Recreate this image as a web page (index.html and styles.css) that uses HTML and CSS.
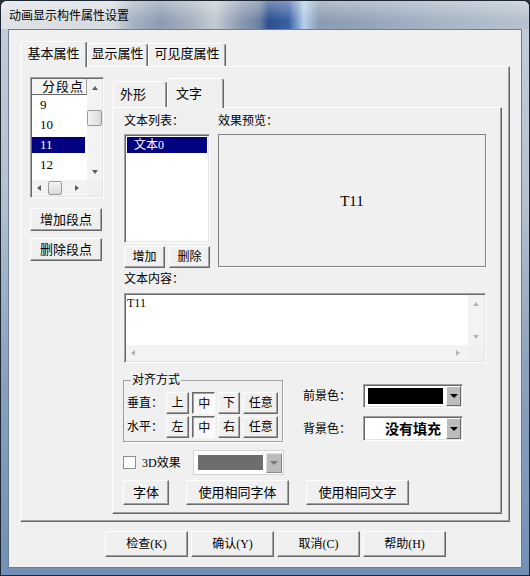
FILE: index.html
```html
<!DOCTYPE html>
<html lang="zh-CN">
<head>
    <meta charset="UTF-8">
    <title>动画显示构件属性设置</title>
    <link rel="stylesheet" href="styles.css">
</head>
<body>
<div class="window">
    <div class="titlebar">动画显示构件属性设置</div>
    <div class="client">
        <div class="tabs-outer">
            <div class="tabstrip">
                <div class="tab active w-basic">基本属性</div>
                <div class="tab w-show">显示属性</div>
                <div class="tab w-vis">可见度属性</div>
            </div>
            <div class="panel outer-panel">
                <div class="seg-col">
                    <div class="seg-list sunken">
                        <div class="seg-main">
                            <div class="seg-head">分段点</div>
                            <ul class="seg-items">
                                <li><span>9</span></li>
                                <li><span>10</span></li>
                                <li class="sel"><span>11</span></li>
                                <li><span>12</span></li>
                                <li><span>13</span></li>
                            </ul>
                        </div>
                        <div class="vbar">
                            <div class="sb-btn"><i class="ar ar-up"></i></div>
                            <div class="thumb v-thumb"></div>
                            <div class="sb-fill"></div>
                            <div class="sb-btn"><i class="ar ar-down"></i></div>
                        </div>
                        <div class="hbar">
                            <div class="sb-btn"><i class="ar ar-left"></i></div>
                            <div class="thumb h-thumb"></div>
                            <div class="sb-fill"></div>
                            <div class="sb-btn last"><i class="ar ar-right"></i></div>
                        </div>
                        <div class="sb-corner"></div>
                    </div>
                    <button class="btn seg-btn">增加段点</button>
                    <button class="btn seg-btn second">删除段点</button>
                </div>

                <div class="tabs-inner">
                    <div class="tabstrip inner-strip">
                        <div class="tab itab w-shape">外形</div>
                        <div class="tab itab active w-text">文字</div>
                    </div>
                    <div class="panel inner-panel">
                        <div class="label-row">
                            <span class="lbl-list">文本列表：</span>
                            <span>效果预览：</span>
                        </div>
                        <div class="main-row">
                            <div class="textlist-col">
                                <div class="textlist sunken">
                                    <div class="tl-item">文本0</div>
                                </div>
                                <div class="tl-btns">
                                    <button class="btn tl-btn">增加</button>
                                    <button class="btn tl-btn">删除</button>
                                </div>
                            </div>
                            <div class="preview">T11</div>
                        </div>
                        <div class="content-lbl">文本内容：</div>
                        <div class="memo sunken">
                            <div class="memo-text">T11</div>
                            <div class="vbar dim">
                                <div class="sb-btn"><i class="ar ar-up"></i></div>
                                <div class="sb-fill"></div>
                                <div class="sb-btn"><i class="ar ar-down"></i></div>
                            </div>
                            <div class="hbar dim">
                                <div class="sb-btn"><i class="ar ar-left"></i></div>
                                <div class="sb-fill"></div>
                                <div class="sb-btn last"><i class="ar ar-right"></i></div>
                            </div>
                            <div class="sb-corner"></div>
                        </div>

                        <div class="lower">
                            <fieldset class="align-group">
                                <legend>对齐方式</legend>
                                <div class="al-row">
                                    <span class="al-lbl">垂直：</span>
                                    <button class="btn al-btn">上</button>
                                    <button class="btn al-btn down">中</button>
                                    <button class="btn al-btn">下</button>
                                    <button class="btn al-btn wide">任意</button>
                                </div>
                                <div class="al-row second">
                                    <span class="al-lbl">水平：</span>
                                    <button class="btn al-btn">左</button>
                                    <button class="btn al-btn down">中</button>
                                    <button class="btn al-btn">右</button>
                                    <button class="btn al-btn wide">任意</button>
                                </div>
                            </fieldset>
                            <div class="colors">
                                <div class="color-row">
                                    <span class="color-lbl">前景色：</span>
                                    <div class="combo sunken">
                                        <div class="swatch black"></div>
                                        <div class="dd"><i class="ar-dd"></i></div>
                                    </div>
                                </div>
                                <div class="color-row row2">
                                    <span class="color-lbl">背景色：</span>
                                    <div class="combo sunken">
                                        <div class="swatch nofill">没有填充</div>
                                        <div class="dd"><i class="ar-dd"></i></div>
                                    </div>
                                </div>
                            </div>
                        </div>

                        <div class="fx-row">
                            <span class="checkbox"></span>
                            <span class="fx-lbl">3D效果</span>
                            <div class="combo combo-off">
                                <div class="swatch gray"></div>
                                <div class="dd off"><i class="ar-dd"></i></div>
                            </div>
                        </div>
                        <div class="font-row">
                            <button class="btn f-btn">字体</button>
                            <button class="btn f-btn wide">使用相同字体</button>
                            <button class="btn f-btn wide">使用相同文字</button>
                        </div>
                    </div>
                </div>
            </div>
        </div>
        <div class="dlg-buttons">
            <button class="btn dlg-btn">检查(K)</button>
            <button class="btn dlg-btn">确认(Y)</button>
            <button class="btn dlg-btn">取消(C)</button>
            <button class="btn dlg-btn">帮助(H)</button>
        </div>
    </div>
</div>
</body>
</html>
```

FILE: styles.css
```css
* {
    box-sizing: border-box;
}
html, body {
    margin: 0;
    padding: 0;
}
body {
    background: #2a3039;
    font-family: "Liberation Serif", "Noto Sans CJK SC", serif;
    font-size: 12px;
    line-height: 16px;
    color: #000;
}

/* window frame */
.window {
    width: 530px;
    height: 576px;
    border: 1px solid #1d2633;
    border-radius: 7px 7px 0 0;
    padding: 0 7px;
    background: linear-gradient(180deg, #c4ced8 0%, #b3c0ce 35%, #8aa1be 65%, #7290b6 100%);
    overflow: hidden;
}
.titlebar {
    height: 28px;
    margin: 0 -7px;
    padding-left: 8px;
    line-height: 28px;
    font-family: "Noto Sans CJK SC", sans-serif;
    background:
        linear-gradient(180deg, rgba(255,255,255,0.35) 0%, rgba(255,255,255,0) 70%),
        linear-gradient(90deg, #dfe2e6 0px, #d6dbe0 112px, #a6b2c1 132px, #8c9bb0 160px, #a9b4c2 192px, #c4cbd3 214px, #8e9db2 238px, #6d82a2 258px, #2c4f8f 268px, #3a62a6 288px, #b6d0ea 303px, #8b9cb2 318px, #93a3b8 360px, #a5b3c4 430px, #b7c3cf 530px);
}
.client {
    height: 539px;
    background: #f0f0f0;
    border: 1px solid #6e7e92;
    padding: 11px 0 0 11px;
}

/* 3d borders */
.sunken {
    border: 1px solid;
    border-color: #a0a0a0 #fff #fff #a0a0a0;
    box-shadow: inset 1px 1px #696969, inset -1px -1px #e3e3e3;
    padding: 1px;
}
.btn {
    font-family: inherit;
    font-size: 12px;
    line-height: 16px;
    color: #000;
    background: #f0f0f0;
    border: 1px solid;
    border-color: #fff #696969 #696969 #fff;
    box-shadow: inset -1px -1px #a0a0a0;
    padding: 0;
    margin: 0;
    white-space: nowrap;
}
.btn.down {
    border-color: #696969 #fff #fff #696969;
    box-shadow: inset 1px 1px #a0a0a0;
    background: #f9f9f9;
    padding: 2px 0 0 2px;
}
.panel {
    border: 1px solid;
    border-color: #fff #696969 #696969 #fff;
    box-shadow: inset -1px -1px #a0a0a0;
    background: #f0f0f0;
}

/* tabs */
.tabstrip {
    display: flex;
    align-items: flex-end;
    height: 25px;
}
.tab {
    height: 23px;
    padding-top: 1px;
    text-align: center;
    font-size: 13px;
    line-height: 17px;
    background: #f0f0f0;
    border: 1px solid #fff;
    border-right-color: #696969;
    border-bottom: 0;
    border-radius: 3px 3px 0 0;
    box-shadow: inset -1px 0 #a0a0a0;
}
.tab.active {
    height: 26px;
    margin-bottom: -1px;
    padding-top: 3px;
    z-index: 1;
}
.w-basic { width: 67px; }
.w-show { width: 61px; }
.w-vis { width: 78px; }

.tabs-outer {
    width: 490px;
}
.outer-panel {
    height: 456px;
    display: flex;
    align-items: flex-start;
    padding: 10px 0 0 9px;
}

/* segment list */
.seg-col {
    width: 74px;
    display: flex;
    flex-direction: column;
}
.seg-list {
    height: 121px;
    display: grid;
    grid-template-columns: 1fr 15px;
    grid-template-rows: 1fr 16px;
    background: #fff;
}
.seg-main {
    overflow: hidden;
}
.seg-head {
    height: 16px;
    background: #f4f4f4;
    border-bottom: 1px solid #696969;
    border-right: 1px solid #a0a0a0;
    text-align: right;
    padding-right: 2px;
    font-size: 13px;
    line-height: 15px;
    letter-spacing: 1px;
}
.seg-items {
    list-style: none;
    margin: 0;
    padding: 0;
    font-size: 13px;
}
.seg-items li {
    height: 20px;
    padding: 2px 2px 2px 0;
}
.seg-items span {
    display: block;
    height: 16px;
    line-height: 16px;
    padding-left: 8px;
}
.seg-items .sel span {
    background: #000080;
    color: #fff;
}
.seg-btn {
    width: 72px;
    height: 23px;
    margin-top: 10px;
    font-size: 13px;
}
.seg-btn.second {
    margin-top: 7px;
}

/* scrollbars */
.vbar {
    display: flex;
    flex-direction: column;
    background: #f3f3f3;
    color: #5e5e5e;
}
.hbar {
    display: flex;
    background: #f3f3f3;
    color: #5e5e5e;
}
.vbar.dim, .hbar.dim {
    color: #b4b4b4;
}
.sb-btn {
    display: flex;
    align-items: center;
    justify-content: center;
    flex: 0 0 17px;
}
.hbar .sb-btn {
    flex: 0 0 14px;
}
.hbar .sb-btn.last {
    margin-right: 3px;
}
.sb-fill {
    flex: 1;
}
.sb-corner {
    background: #f0f0f0;
}
.thumb {
    border: 1px solid #9a9a9a;
    border-radius: 2px;
    background: linear-gradient(90deg, #f4f4f4, #dadada);
}
.v-thumb {
    height: 16px;
    margin-top: 14px;
}
.h-thumb {
    width: 14px;
    margin: 1px 0 1px 2px;
    background: linear-gradient(180deg, #f4f4f4, #dadada);
}
.ar {
    width: 0;
    height: 0;
    border-style: solid;
}
.ar-up {
    border-width: 0 3px 4px;
    border-color: transparent transparent currentColor;
}
.ar-down {
    border-width: 4px 3px 0;
    border-color: currentColor transparent transparent;
}
.ar-left {
    border-width: 3px 4px 3px 0;
    border-color: transparent currentColor transparent transparent;
}
.ar-right {
    border-width: 3px 0 3px 4px;
    border-color: transparent transparent transparent currentColor;
}

/* inner tabs */
.tabs-inner {
    margin: 1px 0 0 8px;
    width: 390px;
}
.inner-strip {
    height: 29px;
    padding-left: 1px;
}
.itab {
    height: 26px;
    padding: 4px 0 0 6px;
    text-align: left;
}
.itab.active {
    height: 30px;
    padding: 6px 0 0 8px;
}
.w-shape { width: 54px; }
.w-text { width: 57px; }
.inner-panel {
    height: 407px;
    padding: 5px 0 0 11px;
}

.label-row {
    display: flex;
    height: 16px;
}
.lbl-list {
    width: 94px;
}
.main-row {
    display: flex;
    gap: 8px;
    margin-top: 5px;
}
.textlist-col {
    width: 86px;
}
.textlist {
    height: 109px;
    background: #fff;
}
.tl-item {
    height: 16px;
    margin: 1px 1px 0;
    padding-left: 7px;
    background: #000080;
    color: #fff;
}
.tl-btns {
    display: flex;
    gap: 4px;
    margin-top: 3px;
}
.tl-btn {
    width: 41px;
    height: 22px;
}
.preview {
    width: 268px;
    height: 133px;
    border: 1px solid #828282;
    box-shadow: 1px 1px 0 #fff;
    display: flex;
    align-items: center;
    justify-content: center;
    font-size: 15px;
}
.content-lbl {
    margin-top: 3px;
    height: 16px;
}
.memo {
    margin-top: 6px;
    width: 362px;
    height: 70px;
    background: #fff;
    display: grid;
    grid-template-columns: 1fr 16px;
    grid-template-rows: 1fr 16px;
}
.memo-text {
    padding-left: 1px;
}

/* alignment + colours */
.lower {
    display: flex;
    align-items: flex-start;
    margin-top: 10px;
}
.align-group {
    width: 160px;
    margin: 0 0 0 -1px;
    padding: 5px 4px 3px 3px;
    border: 1px solid #a0a0a0;
    box-shadow: 1px 1px 0 #fff;
    min-width: 0;
}
.align-group legend {
    padding: 0 1px;
    margin-left: 4px;
    line-height: 14px;
}
.al-row {
    display: flex;
    align-items: center;
    gap: 3px;
    height: 22px;
}
.al-row.second {
    margin-top: 2px;
}
.al-lbl {
    flex: 0 0 35px;
    white-space: nowrap;
}
.al-btn {
    width: 23px;
    height: 22px;
}
.al-btn.wide {
    width: 35px;
}
.colors {
    margin: 11px 0 0 20px;
}
.color-row {
    display: flex;
    align-items: center;
}
.color-row.row2 {
    margin-top: 8px;
}
.color-lbl {
    width: 60px;
}
.combo {
    width: 100px;
    height: 24px;
    display: flex;
    align-items: center;
    background: #fff;
}
.row2 .combo {
    height: 25px;
}
.swatch {
    width: 75px;
    height: 16px;
    margin-left: 3px;
}
.swatch.black {
    background: #000;
}
.swatch.nofill {
    height: 19px;
    background: #fff;
    text-align: right;
    padding-right: 2px;
    font-family: "Noto Sans CJK SC", sans-serif;
    font-weight: bold;
    font-size: 14px;
    line-height: 19px;
}
.dd {
    width: 15px;
    height: 100%;
    margin-left: 3px;
    background: #bcbcbc;
    border: 1px solid;
    border-color: #fff #696969 #696969 #fff;
    display: flex;
    align-items: center;
    justify-content: center;
}
.ar-dd {
    width: 0;
    height: 0;
    border-style: solid;
    border-width: 4px 4px 0;
    border-color: #000 transparent transparent;
}
.dd.off {
    width: 16px;
    height: 20px;
    border-color: #e0e0e0 #8a8a8a #8a8a8a #e0e0e0;
}
.dd.off .ar-dd {
    border-top-color: #777;
}

.fx-row {
    display: flex;
    align-items: center;
    height: 25px;
    margin-top: 8px;
}
.checkbox {
    width: 13px;
    height: 13px;
    margin-left: -1px;
    background: #fff;
    border: 1px solid #8e8f8f;
}
.fx-lbl {
    width: 51px;
    margin-left: 6px;
}
.combo-off {
    width: 91px;
    height: 25px;
    border: 1px solid #d4d4d4;
    padding: 1px;
}
.swatch.gray {
    width: 66px;
    height: 15px;
    margin-left: 3px;
    background: #6d6d6d;
}

.font-row {
    display: flex;
    margin-top: 5px;
}
.f-btn {
    width: 46px;
    height: 25px;
    margin-left: -1px;
    font-size: 13px;
}
.f-btn.wide {
    width: 103px;
    margin-left: 17px;
}

/* dialog buttons */
.dlg-buttons {
    display: flex;
    gap: 3px;
    margin: 9px 0 0 85px;
}
.dlg-btn {
    width: 83px;
    height: 26px;
}
```
